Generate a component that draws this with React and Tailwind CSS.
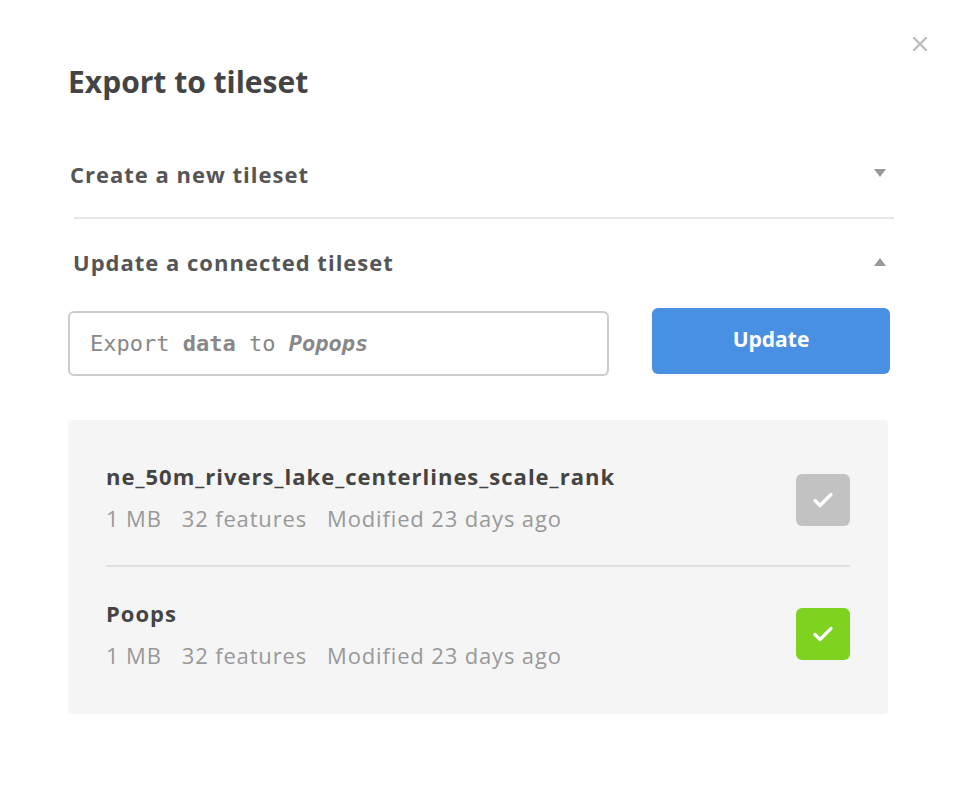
import { useState } from 'react'

const tilesets = [
  { name: 'ne_50m_rivers_lake_centerlines_scale_rank', size: '1 MB', features: '32 features', modified: 'Modified 23 days ago', selected: false },
  { name: 'Poops', size: '1 MB', features: '32 features', modified: 'Modified 23 days ago', selected: true },
]

function Check({ on, className = '' }) {
  return (
    <div className={`w-[54px] h-[52px] rounded-[6px] flex items-center justify-center ${on ? 'bg-[#7ed321]' : 'bg-[#c2c2c2]'} ${className}`}>
      <svg width="22" height="18" viewBox="0 0 22 18" fill="none">
        <path d="M3 9.5l5 5L19 3.5" stroke="white" strokeWidth="3.2" strokeLinecap="round" strokeLinejoin="round" />
      </svg>
    </div>
  )
}

export default function App() {
  const [open, setOpen] = useState('update')

  return (
    <div className="w-[960px] h-[786px] bg-white relative font-['Open_Sans',sans-serif]">
      <button className="absolute left-[910px] top-[34px] w-[20px] h-[20px] flex items-center justify-center">
        <svg width="16" height="16" viewBox="0 0 16 16">
          <path d="M2 2L14 14M14 2L2 14" stroke="#bdbdbd" strokeWidth="2.4" strokeLinecap="round" />
        </svg>
      </button>

      <div className="pl-[68px] pr-[70px] pt-[62px]">
        <h1 className="text-[30px] leading-[40px] font-bold text-[#444]">Export to tileset</h1>

        <div className="mt-[54px] pl-[2px]">
          <button
            onClick={() => setOpen(open === 'create' ? '' : 'create')}
            className="w-full flex items-center justify-between h-[36px]"
          >
            <span className="text-[22px] font-bold tracking-[1px] text-[#555]">Create a new tileset</span>
            <svg width="12" height="8" viewBox="0 0 12 8" className="mt-[-2px] mr-[4px]"><path d="M0 0h12L6 8z" fill="#999" /></svg>
          </button>
        </div>

        <div className="ml-[6px] mr-[-4px] mt-[25px] border-t-2 border-[#e5e5e5]" />

        <div className="mt-[25px] pl-[5px]">
          <button
            onClick={() => setOpen(open === 'update' ? '' : 'update')}
            className="w-full flex items-center justify-between h-[36px]"
          >
            <span className="text-[22px] font-bold tracking-[1px] text-[#555]">Update a connected tileset</span>
            <svg width="12" height="8" viewBox="0 0 12 8" className="mr-[4px]"><path d="M6 0l6 8H0z" fill="#999" /></svg>
          </button>
        </div>

        {open === 'update' && (
          <>
            <div className="mt-[28px] flex items-start justify-between">
              <div className="w-[541px] h-[65px] mt-[3px] border-2 border-[#ccc] rounded-[6px] flex items-center px-[20px] font-['DejaVu_Sans_Mono',monospace] text-[22px] text-[#888]">
                <span>Export <b className="font-bold">data</b> to <i className="font-bold">Popops</i></span>
              </div>
              <button className="w-[238px] h-[66px] pb-[3px] rounded-[6px] bg-[#4a90e2] text-white text-[21px] font-bold">Update</button>
            </div>

            <div className="mt-[44px] w-[820px] bg-[#f5f5f5] rounded-[4px] px-[38px] pt-[38px] pb-[41px]">
              {tilesets.map((t, i) => (
                <div key={t.name} className={`flex items-center justify-between ${i > 0 ? 'border-t-2 border-[#e1e1e1] pt-[28px]' : 'pb-[29px]'}`}>
                  <div>
                    <div className="text-[22px] leading-[36px] font-bold tracking-[1px] text-[#444]">{t.name}</div>
                    <div className="text-[22px] leading-[36px] tracking-[0.85px] text-[#999] flex gap-[20px] mt-[6px]">
                      <span>{t.size}</span>
                      <span>{t.features}</span>
                      <span>{t.modified}</span>
                    </div>
                  </div>
                  <Check on={t.selected} className={i === 0 ? 'mt-[6px]' : ''} />
                </div>
              ))}
            </div>
          </>
        )}
      </div>
    </div>
  )
}
